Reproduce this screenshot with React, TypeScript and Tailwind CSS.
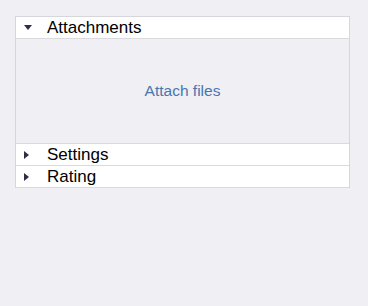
import React from "react";

const Down = () => (
  <svg width="8" height="5" viewBox="0 0 8 5" className="block">
    <path d="M0 0 L8 0 L4 5 Z" fill="#2e2e48" />
  </svg>
);
const Right = () => (
  <svg width="5" height="8" viewBox="0 0 5 8" className="block">
    <path d="M0 0 L5 4 L0 8 Z" fill="#2e2e48" />
  </svg>
);

function Row({ open, label }: { open?: boolean; label: string }) {
  return (
    <div className="flex h-[22px] items-center bg-white border-b border-[#d9d9de]">
      <div className="w-[31px] flex justify-start pl-[8px]">{open ? <Down /> : <Right />}</div>
      <span className="text-[17px] leading-none text-black">{label}</span>
    </div>
  );
}

export default function App() {
  return (
    <div
      className="w-[368px] h-[306px] bg-[#efeff4] pt-[16px] pl-[15px]"
      style={{ fontFamily: '"Liberation Sans", Arial, sans-serif' }}
    >
      <div className="w-[335px] border border-b-0 border-[#d6d6dc]">
        <Row open label="Attachments" />
        <div className="h-[105px] flex items-center justify-center border-b border-[#d9d9de]">
          <span className="text-[15.5px] text-[#4a76b0]">Attach files</span>
        </div>
        <Row label="Settings" />
        <Row label="Rating" />
      </div>
    </div>
  );
}
